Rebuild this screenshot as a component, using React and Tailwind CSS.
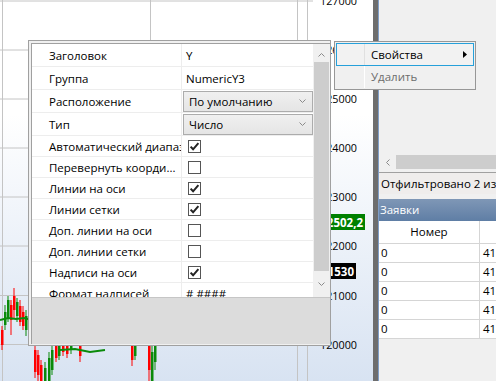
import React from "react";

const FONT = "font-['Open_Sans',sans-serif]";

const gridY = [1, 50, 99, 148, 197, 246, 295.5, 344.5];
const labels = ["127000", "126000", "125000", "124000", "123000", "122000", "121000", "120000"];

const candles = [
  [1, 330, 345, 326, 350, "r"],
  [4, 312, 325, 305, 330, "g"],
  [7, 300, 318, 296, 322, "g"],
  [10, 305, 320, 300, 335, "r"],
  [13, 296, 310, 288, 318, "r"],
  [16, 302, 316, 298, 322, "g"],
  [19, 306, 322, 300, 326, "r"],
  [22, 312, 326, 306, 330, "r"],
  [25, 316, 330, 310, 336, "g"],
  [34, 350, 372, 346, 378, "r"],
  [37, 355, 375, 350, 381, "r"],
  [40, 365, 381, 360, 381, "r"],
  [44, 368, 381, 362, 381, "g"],
  [48, 358, 381, 352, 381, "g"],
  [51, 350, 370, 346, 375, "g"],
  [55, 346, 358, 344, 362, "r"],
  [58, 346, 356, 344, 360, "g"],
  [62, 346, 352, 344, 356, "r"],
  [66, 346, 354, 344, 358, "r"],
  [70, 346, 350, 344, 354, "g"],
  [79, 346, 356, 344, 362, "r"],
  [131, 346, 360, 344, 366, "r"],
  [134, 346, 356, 344, 360, "g"],
  [148, 346, 370, 344, 381, "r"],
  [151, 352, 381, 346, 381, "g"],
  [154, 346, 362, 344, 370, "g"],
];

function Chart() {
  return (
    <div className="relative w-[373px] h-full shrink-0 bg-gradient-to-b from-white from-30% to-[#d8e3f2]">
      <svg width="373" height="381" className="block" style={{ fontFamily: "'Open Sans', sans-serif" }}>
        {gridY.map((y, i) => (
          <line key={i} x1="0" x2="313" y1={y} y2={y} stroke="#c4c4c4" strokeWidth="1" />
        ))}
        {[2.5, 150.5, 297.5, 307.5].map((x, i) => (
          <line key={i} x1={x} x2={x} y1="0" y2="381" stroke="#c4c4c4" strokeWidth="1" />
        ))}
        {candles.map(([x, t, b, wt, wb, c], i) => {
          const col = c === "r" ? "#ff0000" : "#0a8a0a";
          return (
            <g key={i}>
              <line x1={x + 1} x2={x + 1} y1={wt} y2={wb} stroke={col} strokeWidth="1" />
              <rect x={x} y={t} width="2.5" height={b - t} fill={col} />
            </g>
          );
        })}
        <polyline points="0,320 8,318 16,319 24,318 32,320" fill="none" stroke="#0a8a0a" strokeWidth="2" />
        <polyline points="60,350 75,349 90,352 105,350" fill="none" stroke="#0a8a0a" strokeWidth="2" />
        {labels.map((l, i) => (
          <text key={i} x="357" y={gridY[i] + 4} fontSize="10.8" fill="#000" textAnchor="end">
            {l}
          </text>
        ))}
        <rect x="316" y="214" width="49" height="16" fill="#008000" />
        <text x="363" y="226.5" fontSize="11.5" fontWeight="700" fill="#fff" textAnchor="end">122502,2</text>
        <rect x="316" y="263" width="40" height="16" fill="#000" />
        <text x="354" y="275.5" fontSize="11.5" fontWeight="700" fill="#fff" textAnchor="end">121530</text>
      </svg>
    </div>
  );
}

function Check({ on }) {
  return (
    <svg width="13" height="13" viewBox="0 0 13 13" className="block">
      <rect x="0.5" y="0.5" width="12" height="12" fill="#fff" stroke="#555" />
      {on && <path d="M2.6 6.6 L5.1 9.3 L10.4 3.2" fill="none" stroke="#222" strokeWidth="2" />}
    </svg>
  );
}

function Chevron({ up }) {
  return (
    <svg width="7" height="4" viewBox="0 0 7 4" className="block">
      <path d={up ? "M0.5 3.5 L3.5 0.5 L6.5 3.5" : "M0.5 0.5 L3.5 3.5 L6.5 0.5"} fill="none" stroke="#8a8a8a" strokeWidth="1" />
    </svg>
  );
}

const rows = [
  { label: "Заголовок", kind: "text", value: "Y", h: "h-[23px]" },
  { label: "Группа", kind: "text", value: "NumericY3", h: "h-[23px]" },
  { label: "Расположение", kind: "combo", value: "По умолчанию", h: "h-[23px]" },
  { label: "Тип", kind: "combo", value: "Число", h: "h-[23px]" },
  { label: "Автоматический диапазон", kind: "check", value: true, h: "h-[21px]" },
  { label: "Перевернуть коорди...", kind: "check", value: false, h: "h-[21px]" },
  { label: "Линии на оси", kind: "check", value: true, h: "h-[21px]" },
  { label: "Линии сетки", kind: "check", value: true, h: "h-[21px]" },
  { label: "Доп. линии на оси", kind: "check", value: false, h: "h-[21px]" },
  { label: "Доп. линии сетки", kind: "check", value: false, h: "h-[21px]" },
  { label: "Надписи на оси", kind: "check", value: true, h: "h-[21px]" },
  { label: "Формат надписей", kind: "text", value: "# ####", h: "h-[21px]" },
];

function PropertyPopup() {
  return (
    <div className="absolute left-[28px] top-[40px] w-[303px] h-[306px] border border-[#a0a0a0] bg-[#f0f0f0] pl-[2px] pt-[2px] pb-[1px]">
      <div className="w-full h-full border-l border-t border-[#a0a0a0] flex flex-col">
        <div className="h-[253px] flex overflow-hidden bg-white">
          <div className="w-[281px] flex flex-col">
            {rows.map((r, i) => (
              <div key={i} className={`${r.h} shrink-0 flex border-b border-[#ededed]`}>
                <div className="w-[149px] shrink-0 pl-[17px] pt-px flex items-center overflow-hidden whitespace-nowrap text-[11.5px] text-black">
                  {r.label}
                </div>
                <div className="w-px bg-[#ededed] shrink-0" />
                <div className="flex-1 flex items-center overflow-hidden whitespace-nowrap text-[11.5px] text-black">
                  {r.kind === "text" && <span className="pl-[4px] pt-px">{r.value}</span>}
                  {r.kind === "check" && (
                    <div className="pl-[6px]">
                      <Check on={r.value} />
                    </div>
                  )}
                  {r.kind === "combo" && (
                    <div className="ml-px w-[130px] h-[21px] border border-[#acacac] bg-gradient-to-b from-[#f0f0f0] to-[#e5e5e5] flex items-center justify-between pl-[5px] pr-[6px]">
                      <span className="pt-px">{r.value}</span>
                      <Chevron />
                    </div>
                  )}
                </div>
              </div>
            ))}
          </div>
          <div className="w-[17px] shrink-0 bg-[#f0f0f0] flex flex-col items-center">
            <div className="h-[18px] pt-[3px] flex items-center justify-center">
              <Chevron up />
            </div>
            <div className="w-[15px] h-[209px] bg-[#cdcdcd]" />
            <div className="flex-1 flex items-center justify-center">
              <Chevron />
            </div>
          </div>
        </div>
        <div className="flex-1 border-t border-[#c6c6c6] bg-[#dcdcdc]" />
      </div>
    </div>
  );
}

function ContextMenu() {
  return (
    <div className="absolute left-[334px] top-[41px] w-[142px] h-[49px] border border-[#979797] bg-[#f0f0f0] p-[1px] text-[11.5px]">
      <div className="relative h-[23px] border border-[#26a0da] bg-[#f2f2f2] flex items-center">
        <div className="w-[27px] h-full shrink-0" />
        <div className="w-px h-full bg-[#e0e0e0]" />
        <span className="pl-[6px] text-black">Свойства</span>
        <svg width="4" height="7" viewBox="0 0 4 7" className="absolute right-[6px] top-[7px]">
          <path d="M0 0 L4 3.5 L0 7 Z" fill="#000" />
        </svg>
      </div>
      <div className="h-[22px] flex items-center">
        <div className="w-[28px] h-full shrink-0" />
        <div className="w-px h-full bg-[#e0e0e0] border-r border-white" />
        <span className="pl-[6px] text-[#6d6d6d]">Удалить</span>
      </div>
    </div>
  );
}

function RightPanel() {
  const dataRows = [0, 1, 2, 3, 4];
  return (
    <div className="flex-1 h-full bg-[#f0f0f0] border-l border-[#7f9dc6] flex flex-col text-[11.5px]">
      <div className="h-[154px] shrink-0" />
      <div className="h-[16px] shrink-0 flex">
        <div className="w-[17px] flex items-center justify-center">
          <svg width="4" height="7" viewBox="0 0 4 7" className="block">
            <path d="M3.5 0.5 L0.5 3.5 L3.5 6.5" fill="none" stroke="#8a8a8a" />
          </svg>
        </div>
        <div className="flex-1 my-[1px] bg-[#cdcdcd]" />
      </div>
      <div className="h-[2px] shrink-0" />
      <div className="h-[22px] shrink-0 border-t border-[#a0a0a0] bg-[#efedec] flex items-center pl-[2px] whitespace-nowrap overflow-hidden text-black">
        Отфильтровано 2 из
      </div>
      <div className="h-[5px] shrink-0" />
      <div className="h-[22px] shrink-0 bg-gradient-to-b from-[#7f97b6] to-[#5f7ea5] flex items-center pl-[1px] text-white whitespace-nowrap">
        Заявки
      </div>
      <div className="h-[23px] shrink-0 bg-white flex border-b border-[#d5d5d5]">
        <div className="w-[101px] shrink-0 flex items-center justify-center border-r border-[#d5d5d5] text-black">
          Номер
        </div>
        <div className="flex-1" />
      </div>
      {dataRows.map((i) => (
        <div key={i} className="h-[19px] shrink-0 bg-white flex border-b border-[#d5d5d5] text-black">
          <div className="w-[101px] shrink-0 flex items-center pl-[2px] border-r border-[#d5d5d5]">0</div>
          <div className="flex-1 flex items-center pl-[3px] whitespace-nowrap overflow-hidden">41</div>
        </div>
      ))}
    </div>
  );
}

export default function App() {
  return (
    <div className={`relative w-[496px] h-[381px] overflow-hidden flex bg-[#f0f0f0] ${FONT}`}>
      <Chart />
      <div className="w-[5px] h-full shrink-0 bg-[#6d6d6d]" />
      <RightPanel />
      <PropertyPopup />
      <ContextMenu />
    </div>
  );
}
